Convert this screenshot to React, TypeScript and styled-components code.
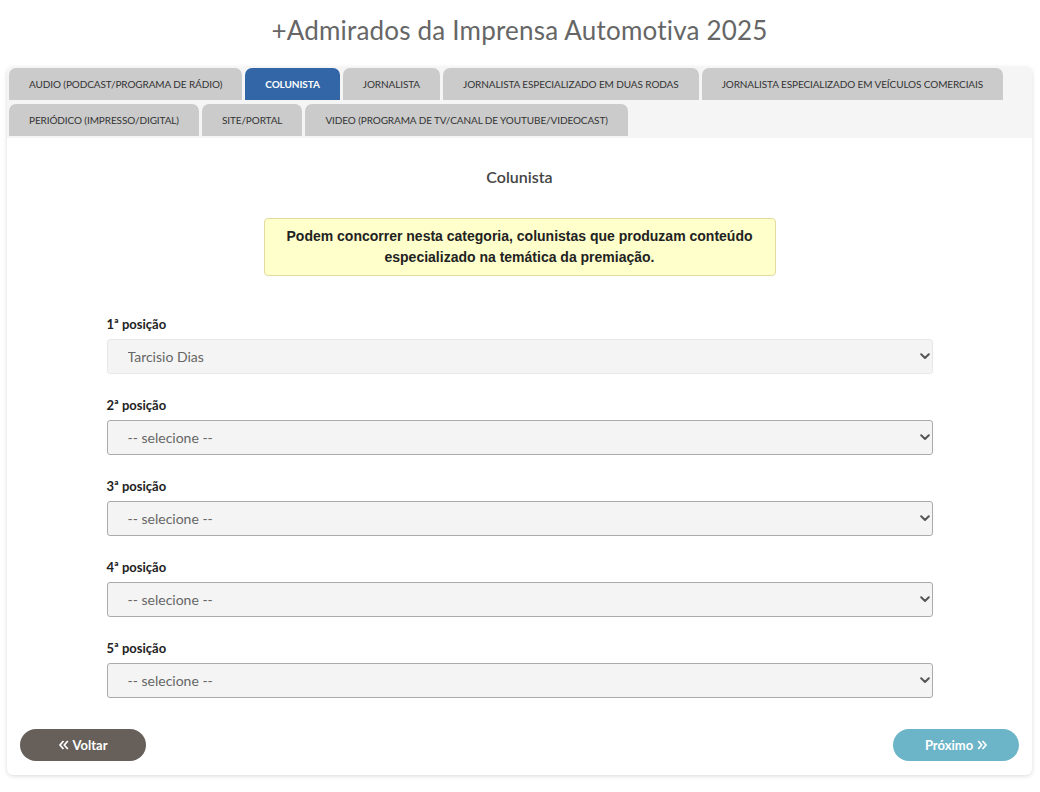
import React from 'react'
import styled, { createGlobalStyle } from 'styled-components'

const GlobalStyle = createGlobalStyle`
  body {
    margin: 0;
    background: #fff;
    font-family: Lato, "Noto Sans", sans-serif;
    color: #333;
  }
`

const tabs = [
  ['AUDIO (PODCAST/PROGRAMA DE RÁDIO)', 'COLUNISTA', 'JORNALISTA', 'JORNALISTA ESPECIALIZADO EM DUAS RODAS', 'JORNALISTA ESPECIALIZADO EM VEÍCULOS COMERCIAIS'],
  ['PERIÓDICO (IMPRESSO/DIGITAL)', 'SITE/PORTAL', 'VIDEO (PROGRAMA DE TV/CANAL DE YOUTUBE/VIDEOCAST)'],
]

const positions = [
  { label: '1ª posição', value: 'Tarcisio Dias', disabled: true },
  { label: '2ª posição', value: '-- selecione --' },
  { label: '3ª posição', value: '-- selecione --' },
  { label: '4ª posição', value: '-- selecione --' },
  { label: '5ª posição', value: '-- selecione --' },
]

const Chevron = () => (
  <svg width="10" height="7" viewBox="0 0 10 7">
    <path d="M1.2 1.3 L5 5 L8.8 1.3" fill="none" stroke="#555" strokeWidth="2" strokeLinecap="round" strokeLinejoin="round" />
  </svg>
)

const Arrows = ({ dir }: { dir: 'left' | 'right' }) => (
  <svg width="10" height="10" viewBox="0 0 10 10" style={{ transform: dir === 'left' ? 'none' : 'scaleX(-1)' }}>
    <path d="M4.5 1 L1 5 L4.5 9 M8.8 1 L5.3 5 L8.8 9" fill="none" stroke="#fff" strokeWidth="1.8" strokeLinejoin="round" />
  </svg>
)

export default function App() {
  return (
    <>
      <GlobalStyle />
      <Page>
        <Title>+Admirados da Imprensa Automotiva 2025</Title>
        <Card>
          <TabBar>
            {tabs.map((row, i) => (
              <TabRow key={i}>
                {row.map((t) => (
                  <Tab key={t} $active={t === 'COLUNISTA'}>{t}</Tab>
                ))}
              </TabRow>
            ))}
          </TabBar>
          <Body>
            <Heading>Colunista</Heading>
            <Notice>
              Podem concorrer nesta categoria, colunistas que produzam conteúdo especializado na temática da premiação.
            </Notice>
            <Form>
              {positions.map((p) => (
                <Field key={p.label}>
                  <Label>{p.label}</Label>
                  <SelectWrap>
                    <Select disabled={p.disabled} $disabled={!!p.disabled} defaultValue={p.value}>
                      <option>{p.value}</option>
                    </Select>
                    <ChevronBox><Chevron /></ChevronBox>
                  </SelectWrap>
                </Field>
              ))}
            </Form>
            <Actions>
              <NavButton $color="#675f59"><Arrows dir="left" /> Voltar</NavButton>
              <NavButton $color="#6cb4c8">Próximo <Arrows dir="right" /></NavButton>
            </Actions>
          </Body>
        </Card>
      </Page>
    </>
  )
}

const Page = styled.div`
  padding: 0 8px 16px 7px;
`

const Title = styled.h1`
  margin: 0;
  padding: 14px 0 20px;
  text-align: center;
  font-size: 26px;
  font-weight: 400;
  color: #666;
  letter-spacing: 0.2px;
  line-height: 33px;
`

const Card = styled.div`
  background: #fff;
  border-radius: 6px;
  box-shadow: 0 1px 4px rgba(0, 0, 0, 0.15);
  overflow: hidden;
`

const TabBar = styled.div`
  background: #f5f5f5;
  padding: 1px 2px 2px;
  display: flex;
  flex-direction: column;
  gap: 4px;
`

const TabRow = styled.div`
  display: flex;
  gap: 3px;
`

const Tab = styled.div<{ $active?: boolean }>`
  height: 32px;
  padding: 0 20px;
  display: flex;
  align-items: center;
  border-radius: 7px 7px 0 0;
  font-size: 10px;
  font-weight: ${(p) => (p.$active ? 700 : 400)};
  color: ${(p) => (p.$active ? '#fff' : '#333')};
  background: ${(p) => (p.$active ? '#3266a6' : '#cbcbcb')};
  white-space: nowrap;
  letter-spacing: -0.1px;
`

const Body = styled.div`
  padding: 28px 13px 14px;
  display: flex;
  flex-direction: column;
`

const Heading = styled.h2`
  margin: 0;
  text-align: center;
  font-size: 16px;
  font-weight: 600;
  color: #444;
  line-height: 22px;
`

const Notice = styled.div`
  align-self: center;
  width: 484px;
  margin-top: 30px;
  padding: 7px 13px;
  background: #ffffcc;
  border: 1px solid #e2dba0;
  border-radius: 4px;
  font-family: "Liberation Sans", Arial, sans-serif;
  font-weight: 700;
  font-size: 14px;
  line-height: 21px;
  text-align: center;
  color: #222;
`

const Form = styled.div`
  width: 826px;
  align-self: center;
  margin-top: 39px;
  display: flex;
  flex-direction: column;
  gap: 22px;
`

const Field = styled.div`
  display: flex;
  flex-direction: column;
  gap: 6px;
`

const Label = styled.label`
  font-size: 13px;
  font-weight: 700;
  color: #222;
  line-height: 18px;
`

const SelectWrap = styled.div`
  position: relative;
`

const Select = styled.select<{ $disabled: boolean }>`
  appearance: none;
  width: 100%;
  height: 35px;
  padding: 0 20px;
  background: #f4f4f4;
  border: 1px solid ${(p) => (p.$disabled ? '#e8e8e8' : '#aaa')};
  border-radius: 3px;
  font-family: Lato, "Noto Sans", sans-serif;
  font-size: 14px;
  color: #666;
  opacity: 1;
`

const ChevronBox = styled.span`
  position: absolute;
  right: 3px;
  top: 14px;
  width: 10px;
  height: 7px;
  display: flex;
  pointer-events: none;
`

const Actions = styled.div`
  display: flex;
  justify-content: space-between;
  margin-top: 31px;
`

const NavButton = styled.button<{ $color: string }>`
  width: 126px;
  height: 32px;
  border: none;
  border-radius: 16px;
  background: ${(p) => p.$color};
  color: #fff;
  font-family: Lato, "Noto Sans", sans-serif;
  font-size: 13px;
  font-weight: 700;
  display: flex;
  align-items: center;
  justify-content: center;
  gap: 4px;
`
